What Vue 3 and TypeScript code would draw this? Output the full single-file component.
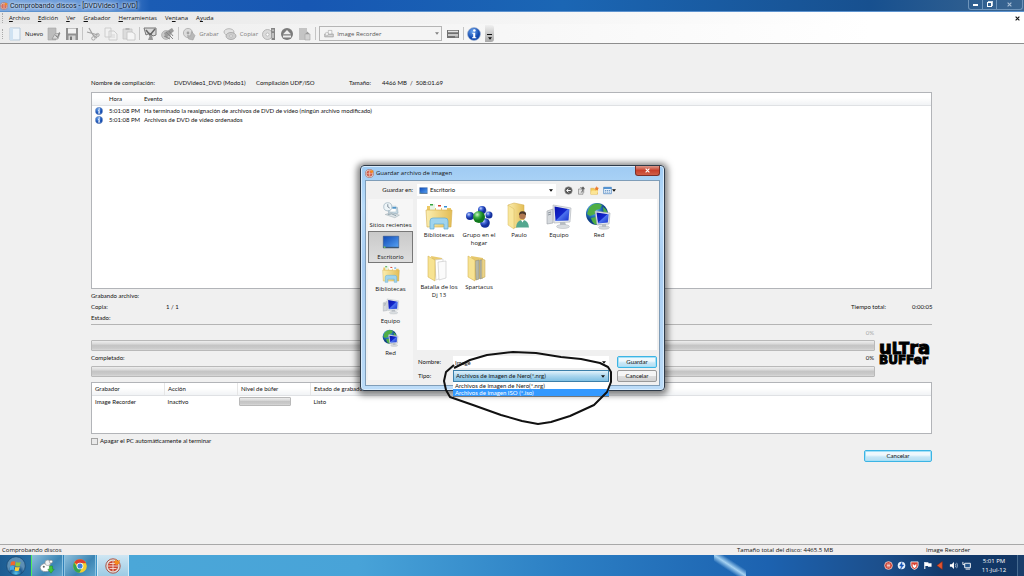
<script setup lang="ts">
import { ref } from 'vue'

interface Tool { id?: string; label?: string; sep?: boolean; name?: string }

const menus: [string, string, string][] = [
  ['', 'A', 'rchivo'],
  ['', 'E', 'dición'],
  ['', 'V', 'er'],
  ['', 'G', 'rabador'],
  ['', 'H', 'erramientas'],
  ['Ve', 'n', 'tana'],
  ['A', 'y', 'uda'],
]

const tools: Tool[] = [
  { id: 'new', label: 'Nuevo' },
  { id: 'open', name: 'Abrir' },
  { id: 'save', name: 'Guardar' },
  { sep: true },
  { id: 'cut', name: 'Cortar' },
  { id: 'copy', name: 'Copiar' },
  { id: 'paste', name: 'Pegar' },
  { sep: true },
  { id: 'check', name: 'Comprobar' },
  { id: 'erase', name: 'Borrar' },
  { sep: true },
  { id: 'burn', label: 'Grabar' },
  { id: 'discs', label: 'Copiar' },
  { id: 'discinfo', name: 'Información del disco' },
  { id: 'eject', name: 'Expulsar' },
  { id: 'label', name: 'Portada' },
  { sep: true },
]

const events = [
  { time: '5:01:08 PM', text: 'Ha terminado la reasignación de archivos de DVD de vídeo (ningún archivo modificado)' },
  { time: '5:01:08 PM', text: 'Archivos de DVD de vídeo ordenados' },
]

const places = [
  { id: 'recent', label: 'Sitios recientes' },
  { id: 'desktop', label: 'Escritorio' },
  { id: 'library', label: 'Bibliotecas' },
  { id: 'computer', label: 'Equipo' },
  { id: 'network', label: 'Red' },
]

const files = [
  { id: 'library', label: 'Bibliotecas' },
  { id: 'group', label: 'Grupo en el hogar' },
  { id: 'user', label: 'Paulo' },
  { id: 'computer', label: 'Equipo' },
  { id: 'network', label: 'Red' },
  { id: 'folder', label: 'Batalla de los Dj 13' },
  { id: 'folderfull', label: 'Spartacus' },
]

const types = ['Archivos de imagen de Nero(*.nrg)', 'Archivos de imagen ISO (*.iso)']
const tray = ['t-nero', 't-blue', 't-shield', 't-flag', 't-red', 't-sound', 't-net']

const place = ref('desktop')
const fileName = ref('Image')
const fileType = ref(types[0])
const hovered = ref(1)
const shutdown = ref(false)
</script>

<template>
  <div class="app">
    <svg class="defs" aria-hidden="true">
      <defs>
        <linearGradient id="gFolder" x1="0" x2="1"><stop offset="0" stop-color="#fbeeb0" /><stop offset="1" stop-color="#e3bd55" /></linearGradient>
        <linearGradient id="gScreen" x1="0" y1="0" x2="1" y2="1"><stop offset="0" stop-color="#0a12a8" /><stop offset=".5" stop-color="#1226cc" /><stop offset=".55" stop-color="#4c72ee" /><stop offset="1" stop-color="#1530cc" /></linearGradient>
        <linearGradient id="gDesk" x1="0" y1="0" x2="1" y2="1"><stop offset="0" stop-color="#0f49b5" /><stop offset="1" stop-color="#58a4f5" /></linearGradient>
        <radialGradient id="gGlobe" cx=".35" cy=".3"><stop offset="0" stop-color="#9fd8f5" /><stop offset=".6" stop-color="#2879c4" /><stop offset="1" stop-color="#0d3f86" /></radialGradient>
        <radialGradient id="gBlue" cx=".35" cy=".3"><stop offset="0" stop-color="#c9d8fc" /><stop offset=".5" stop-color="#3f64d6" /><stop offset="1" stop-color="#14309c" /></radialGradient>
        <radialGradient id="gGreen" cx=".35" cy=".3"><stop offset="0" stop-color="#cdf5c6" /><stop offset=".5" stop-color="#3fb047" /><stop offset="1" stop-color="#127a1e" /></radialGradient>
        <radialGradient id="gInfo" cx=".4" cy=".3"><stop offset="0" stop-color="#6fa8f0" /><stop offset="1" stop-color="#134bb0" /></radialGradient>
        <radialGradient id="gOrb" cx=".5" cy=".9"><stop offset="0" stop-color="#56c4ee" /><stop offset=".6" stop-color="#1c5a90" /><stop offset="1" stop-color="#5d8fb5" /></radialGradient>
      </defs>

      <symbol id="nero" viewBox="0 0 16 16"><circle cx="8" cy="8" r="7.2" fill="#e2dcd8" stroke="#a8564a" /><circle cx="8" cy="8" r="5.2" fill="#c8442f" /><path d="M3 8h10M8 3v10M4.5 5.500h7M4.500 10.500h7" stroke="#f6dcd4" stroke-width=".9" /><path d="M9 4.500l2-3.500 1 2 3-1-1 4-3 1z" fill="#f58a1c" /></symbol>
      <symbol id="info" viewBox="0 0 16 16"><circle cx="8" cy="8" r="7.4" fill="url(#gInfo)" stroke="#a9b7cc" stroke-width=".7" /><circle cx="8.4" cy="4" r="1.5" fill="#fff" /><path d="M6 6.6h3.4v5h1.2v1.2H5.8v-1.2h1.3V7.8H6z" fill="#fff" /></symbol>

      <symbol id="new" viewBox="0 0 14 14"><path d="M2 1h10v12H2z" fill="#eef5fb" stroke="#b6c9da" /><path d="M2 1h3v12H2z" fill="#cfe2f2" /></symbol>
      <symbol id="open" viewBox="0 0 14 14"><path d="M1 1h8v12H1z" fill="#bcbcbc" stroke="#a4a4a4" stroke-width=".6" /><path d="M5 12l3-5 5-1-2 6z" fill="#d8d8d8" stroke="#888" stroke-width=".6" /><path d="M8.500 8l2 2.500 2-5" fill="none" stroke="#777" /></symbol>
      <symbol id="save" viewBox="0 0 14 14"><path d="M1 1h12v12H1z" fill="#8f8f8f" /><path d="M3 1.5h8v5H3z" fill="#f1f1f1" /><path d="M3.5 8.5h7v4.5h-7z" fill="#d4d4d4" /><path d="M5 9.5h2V13H5z" fill="#777" /></symbol>
      <symbol id="cut" viewBox="0 0 14 14"><path d="M3 1l4 7M1 5l11 3M7 8l4 3" stroke="#a0a0a0" stroke-width="1.2" fill="none" /><circle cx="11.6" cy="8" r="1.6" fill="none" stroke="#a6a6a6" /><circle cx="7.4" cy="11.4" r="1.7" fill="none" stroke="#a6a6a6" /></symbol>
      <symbol id="copy" viewBox="0 0 14 14"><path d="M1 1h6v9H1zM5 4h5l3 3v6H5z" fill="#f1f1f1" stroke="#cacaca" stroke-width=".9" /><path d="M7 8h4M7 10h4" stroke="#d6d6d6" /></symbol>
      <symbol id="paste" viewBox="0 0 14 14"><path d="M1 2h9v10H1z" fill="#dcdcdc" stroke="#c4c4c4" stroke-width=".8" /><path d="M3.5 1h4v2h-4z" fill="#b4b4b4" /><path d="M5 5h5l3 2v6H5z" fill="#f5f5f5" stroke="#c2c2c2" stroke-width=".8" /></symbol>
      <symbol id="check" viewBox="0 0 14 14"><path d="M1 1h12v7l-3 1-3-3-4 2z" fill="#d9d9d9" stroke="#777" /><path d="M3 3l4 5 5-6" fill="none" stroke="#666" stroke-width="1.5" /><path d="M7 8l-2 5h5l-1-5z" fill="#969696" /></symbol>
      <symbol id="erase" viewBox="0 0 14 14"><circle cx="5" cy="8" r="4.4" fill="#c9c9c9" stroke="#a4a4a4" stroke-width=".7" /><path d="M3 6l8-5 2 3-8 7z" fill="#9b9b9b" /><path d="M5 5l7 7M8 4l4 5M3 9l6 3" stroke="#868686" /></symbol>
      <symbol id="burn" viewBox="0 0 14 14"><circle cx="6" cy="6" r="4.6" fill="#dcdcdc" stroke="#ababab" stroke-width=".8" /><circle cx="6" cy="6" r="1.4" fill="#a2a2a2" /><path d="M6.500 12l-1-3.500 3 .5 1-4.500 3.500 4-2 4.500z" fill="#b8b8b8" stroke="#949494" stroke-width=".5" /></symbol>
      <symbol id="discs" viewBox="0 0 14 14"><ellipse cx="6" cy="5" rx="5" ry="3.300" fill="#e2e2e2" stroke="#ababab" stroke-width=".8" /><ellipse cx="8" cy="9" rx="5" ry="3.500" fill="#cdcdcd" stroke="#a2a2a2" stroke-width=".8" /><ellipse cx="8" cy="9" rx="1.600" ry="1" fill="#f7f7f7" stroke="#888" stroke-width=".4" /></symbol>
      <symbol id="discinfo" viewBox="0 0 14 14"><circle cx="5.5" cy="7.500" r="5" fill="#dadada" stroke="#aaa" stroke-width=".8" /><circle cx="5.5" cy="7.500" r="1.500" fill="#fff" stroke="#999" stroke-width=".5" /><path d="M9 1h4v12H9.600z" fill="#848484" /><path d="M11 2.500v1.800M11 6v5" stroke="#f0f0f0" stroke-width="1.100" /></symbol>
      <symbol id="eject" viewBox="0 0 14 14"><circle cx="7" cy="7" r="6" fill="#7b7b7b" /><path d="M7 3l4 4.300H3zM3 8.600h8v1.800H3z" fill="#ededed" /></symbol>
      <symbol id="label" viewBox="0 0 14 14"><path d="M1 1h8v12H1z" fill="#c4c4c4" /><path d="M7 7h5v6H7z" fill="#d2d2d2" stroke="#a5a5a5" stroke-width=".6" /><path d="M9.500 4.500l2 2.500H7.500z" fill="#9a9a9a" /></symbol>
      <symbol id="printer" viewBox="0 0 14 14"><path d="M1 7h12v4H1z" fill="#d7d7d7" stroke="#888" stroke-width=".8" /><path d="M6 2h5v5H6z" fill="#f7f7f7" stroke="#999" stroke-width=".7" /><circle cx="4" cy="7" r="2.4" fill="#eee" stroke="#999" stroke-width=".6" /></symbol>
      <symbol id="drive" viewBox="0 0 14 14"><path d="M1 3h12v8H1z" fill="#707070" /><path d="M2 4.5h10M2 8h10" stroke="#e3e3e3" stroke-width="1.3" /><path d="M9 9.8h3" stroke="#bbb" /></symbol>

      <symbol id="library" viewBox="0 0 28 28"><path d="M2 4h7l1 2h16v19H2z" fill="#ecc965" /><path d="M5 2h5v6H5z" fill="#e9f5e7" /><path d="M5 2h3v1.5H5z" fill="#36a340" /><path d="M11 3h5v5h-5z" fill="#fff" /><path d="M13 3h3v1.5h-3z" fill="#d44030" /><path d="M17 4h5v5h-5z" fill="#fff" /><path d="M19 4h3v1.5h-3z" fill="#348fd5" /><path d="M1 8h26l-1 17H2z" fill="url(#gFolder)" stroke="#d4ad4c" stroke-width=".6" /><path d="M5 27v-8q0-3 3-3h12q3 0 3 3v8h-4v-5H9v5z" fill="#9fd4ee" stroke="#5fa9d2" stroke-width=".7" /></symbol>
      <symbol id="group" viewBox="0 0 28 28"><path d="M5 14l9 0 8-6M14 14l6 7" stroke="#c4cfdb" stroke-width="3" /><circle cx="17" cy="8" r="4" fill="url(#gBlue)" /><circle cx="24" cy="13" r="3.500" fill="url(#gBlue)" /><circle cx="5" cy="14" r="4" fill="url(#gBlue)" /><circle cx="20" cy="21" r="4.800" fill="url(#gBlue)" /><circle cx="14" cy="15" r="6" fill="url(#gGreen)" /></symbol>
      <symbol id="user" viewBox="0 0 28 28"><path d="M3 3l6-2 10 2v20L9 26z" fill="url(#gFolder)" stroke="#d0aa4a" stroke-width=".5" /><path d="M3 3l6 4v20l-6-4z" fill="#f8e69c" stroke="#d9b95c" stroke-width=".5" /><circle cx="17.500" cy="14" r="3.300" fill="#b07850" /><path d="M14 13.500q0-4.500 3.800-4.200 3.800 0 3.200 4.200-1.500-2-3.700-2-2.300 0-3.300 2z" fill="#4a382c" /><path d="M11 25.500q.5-7.500 6.500-7.500t6.500 7.500z" fill="#53a78f" /><path d="M16 18l1.500 2.500L19 18z" fill="#fff" /></symbol>
      <symbol id="computer" viewBox="0 0 28 28"><path d="M2 9l6-2v14l-6 1z" fill="#d5d9dd" stroke="#9aa0a6" stroke-width=".6" /><path d="M3 11l3-1M3 13l3-1" stroke="#7d8892" stroke-width=".8" /><path d="M8 3l18 3-1 14-16 1z" fill="#e7eaed" stroke="#a9afb6" stroke-width=".6" /><path d="M9.500 4.600l15 2.600-1 11.200-13 .6z" fill="url(#gScreen)" /><path d="M15 20l5 0 1 3h-6z" fill="#b7bdc3" /><ellipse cx="18" cy="24.500" rx="6.500" ry="2" fill="#dadee1" stroke="#b0b5ba" stroke-width=".5" /></symbol>
      <symbol id="network" viewBox="0 0 28 28"><circle cx="12" cy="12" r="11" fill="url(#gGlobe)" /><path d="M4 6q6-7 13-3l-2 4-4 1-1 4-5 2-3-2zM6 16l5-1 3 4-3 4q-4-2-5-7zM18 5q4 2 4.500 7l-4-2z" fill="#4fae45" /><path d="M10 9l15 2-1 11-12 1z" fill="#e7eaed" stroke="#9fa6ad" stroke-width=".6" /><path d="M11.500 10.400l12.200 1.800-.9 8.400-9.800.8z" fill="url(#gScreen)" /><ellipse cx="19" cy="25.500" rx="5.500" ry="1.800" fill="#d6dadd" stroke="#aaa" stroke-width=".4" /><path d="M17 22h4v3h-4z" fill="#b9bec3" /></symbol>
      <symbol id="folder" viewBox="0 0 28 28"><path d="M6 2l11 2v19l-6 2z" fill="#e9ca70" /><path d="M10 6l8-1v18l-7 3z" fill="#fff" stroke="#c9c9c9" stroke-width=".6" /><path d="M13 8l8-1v17l-7 2z" fill="#fbfbfb" stroke="#c4c4c4" stroke-width=".6" /><path d="M3 2l7 4v21l-7-4z" fill="#f7e392" stroke="#d6b658" stroke-width=".6" /></symbol>
      <symbol id="folderfull" viewBox="0 0 28 28"><path d="M6 2l12 2v20l-8 2z" fill="#e6c76b" /><path d="M10 7l4-1v19l-3 1zM15 6l3 0v18l-3 1z" fill="#b4b7a8" stroke="#8a8a7c" stroke-width=".5" /><path d="M17 5l3 1v17l-3 1z" fill="#ead38a" stroke="#c5a650" stroke-width=".5" /><path d="M3 2l7 4v21l-7-4z" fill="#f7e392" stroke="#d6b658" stroke-width=".6" /></symbol>
      <symbol id="recent" viewBox="0 0 28 28"><path d="M9 12l15-2 1 9-14 3z" fill="#c8dbe6" stroke="#7f99a8" stroke-width=".7" /><path d="M12 8h10v9H12z" fill="#fff" stroke="#9fb2be" stroke-width=".6" /><path d="M16 9h6v3h-6z" fill="#4f94c8" /><circle cx="9" cy="9" r="6.300" fill="#eef5f8" stroke="#90a7b5" /><path d="M9 5v4l3 2" stroke="#456" stroke-width="1" fill="none" /><path d="M5 21l9-3 13 4-7 4z" fill="#dfe5e8" stroke="#92a0a8" stroke-width=".7" /><path d="M9 21l6-1 7 3" stroke="#66808e" fill="none" /></symbol>
      <symbol id="desktop" viewBox="0 0 28 28"><path d="M2 5h24v18H2z" fill="url(#gDesk)" stroke="#294a7d" stroke-width=".8" /><path d="M2 21.500h24V23.500H2z" fill="#3a5572" /><circle cx="4" cy="22" r="1.500" fill="#6fc36b" /></symbol>

      <symbol id="back" viewBox="0 0 12 12"><circle cx="6" cy="6" r="5" fill="#555" stroke="#999" stroke-width=".8" /><path d="M9 6H4M6 3.500L3.500 6 6 8.500" stroke="#fff" stroke-width="1.300" fill="none" /></symbol>
      <symbol id="up" viewBox="0 0 12 12"><path d="M2 4h6v7H2zM4 2h5v7" fill="#e2e2e2" stroke="#777" stroke-width=".8" /><path d="M5 9q3-1 3-5M6 4l2-3 2 3z" fill="#666" stroke="#555" stroke-width=".6" /></symbol>
      <symbol id="newfolder" viewBox="0 0 12 12"><path d="M1 3h4l1 1h4v7H1z" fill="#f3c957" stroke="#d9a63b" stroke-width=".6" /><path d="M2 6h9l-2 5H1z" fill="#fce595" /><path d="M9 0l.8 2L12 2.500 10.500 4l.3 2L9 5 7.200 6l.3-2L6 2.500l2.200-.5z" fill="#ee7a2c" /></symbol>
      <symbol id="view" viewBox="0 0 14 12"><path d="M1 1h12v10H1z" fill="#e9f3fc" stroke="#3576b8" /><path d="M1 1h12v2.500H1z" fill="#3f86cc" /><path d="M3 6h2M6 6h2M9 6h2M3 8.500h2M6 8.500h2M9 8.500h2" stroke="#4a80b8" stroke-width="1.200" /></symbol>
      <symbol id="arrow" viewBox="0 0 6 4"><path d="M0 0h6L3 4z" fill="#111" /></symbol>
      <symbol id="close" viewBox="0 0 8 8"><path d="M1 1l6 6M7 1L1 7" stroke="currentColor" stroke-width="1.800" /></symbol>

      <symbol id="start" viewBox="0 0 20 20"><circle cx="10" cy="10" r="9.300" fill="url(#gOrb)" stroke="#15436d" stroke-width=".7" /><path d="M5 6q2-1.500 4.300-.4L8.700 9.500Q6.500 8.400 4.400 9.800z" fill="#f0672e" /><path d="M10 6q2.200 1.200 4.600 0l-.8 3.900q-2.200 1.200-4.400 0z" fill="#8bc63e" /><path d="M4.200 10.600q2.200-1.300 4.300-.3l-.7 3.800q-2-1-4.200.3z" fill="#45a9e8" /><path d="M9.300 10.700q2.200 1.200 4.400 0l-.8 3.800q-2.100 1.200-4.300 0z" fill="#fbd03b" /></symbol>
      <symbol id="disccopy" viewBox="0 0 20 20"><ellipse cx="8" cy="12" rx="6.500" ry="5" fill="#fff" stroke="#888" stroke-width=".8" /><circle cx="11" cy="6" r="3.500" fill="#f2f2f2" stroke="#999" stroke-width=".8" /><circle cx="15" cy="4.500" r="2" fill="#fff" stroke="#777" stroke-width=".7" /><circle cx="6" cy="11" r="1.300" fill="#666" /><path d="M13 10h4v4h2l-4 5-4-5h2z" fill="#42c43c" stroke="#1c8a25" stroke-width=".6" /></symbol>
      <symbol id="chrome" viewBox="0 0 20 20"><circle cx="10" cy="10" r="8.500" fill="#f5cf2e" /><path d="M10 10L2.640 5.750A8.500 8.500 0 0 1 17.800 6.600L10 6.200z" fill="#dd4030" /><path d="M2.640 5.750A8.500 8.500 0 0 0 9.200 18.500L13 12 10 10 6.500 11.500z" fill="#35a350" /><circle cx="10" cy="10" r="4.200" fill="#fff" /><circle cx="10" cy="10" r="3.200" fill="#3f80e0" /></symbol>

      <symbol id="t-nero" viewBox="0 0 10 10"><circle cx="5" cy="5" r="4.300" fill="#c9382b" stroke="#f0c9c2" /><path d="M3 3.500h4M3 5h4M3 6.500h4" stroke="#fff" stroke-width=".8" /></symbol>
      <symbol id="t-blue" viewBox="0 0 10 10"><circle cx="5" cy="5" r="4.200" fill="#e7f1fb" /><path d="M5.500 1.500L3 5.500h2L4 9l3.500-4.500h-2z" fill="#1656b8" stroke="#1656b8" stroke-width=".6" /></symbol>
      <symbol id="t-shield" viewBox="0 0 10 10"><path d="M1 1h8v4q0 3-4 4.500Q1 8 1 5z" fill="#d8402f" stroke="#f3f3f3" stroke-width=".9" /><path d="M3 3l2 2 2-2v3L5 8 3 6z" fill="#fff" /></symbol>
      <symbol id="t-flag" viewBox="0 0 10 10"><path d="M2 1v8" stroke="#fff" stroke-width="1.200" /><path d="M2 1.500h4v1h3.500v4H5.500v-1H2z" fill="#fff" /></symbol>
      <symbol id="t-red" viewBox="0 0 10 10"><path d="M1 5l6-4.500v9z" fill="#e2562f" stroke="#8a2413" stroke-width=".6" /></symbol>
      <symbol id="t-sound" viewBox="0 0 10 10"><path d="M1 3.500h2L5.500 1v8L3 6.500H1z" fill="#fff" /><path d="M7 3q1.200 2 0 4M8.500 2q2 3 0 6" fill="none" stroke="#dce8f5" stroke-width=".7" /></symbol>
      <symbol id="t-net" viewBox="0 0 10 10"><path d="M3 2.500h6.300v5H3z" fill="#23558c" stroke="#fff" /><path d="M1 1v3h2M4 9h5" stroke="#fff" fill="none" /></symbol>
    </svg>

    <header class="titlebar">
      <svg class="i8"><use href="#nero" /></svg>
      <h1>Comprobando discos - [DVDVideo1_DVD]</h1>
      <div class="winbtns">
        <button aria-label="Minimizar"><i class="min"></i></button>
        <button aria-label="Restaurar"><i class="max"></i></button>
        <button class="wide" aria-label="Cerrar"><svg class="i5"><use href="#close" /></svg></button>
      </div>
    </header>

    <nav class="menubar">
      <i class="grip"></i>
      <button v-for="m in menus" :key="m[2]">{{ m[0] }}<u>{{ m[1] }}</u>{{ m[2] }}</button>
      <button class="mdi" aria-label="Cerrar compilación"><svg class="i5"><use href="#close" /></svg></button>
    </nav>

    <div class="toolbar">
      <i class="grip"></i>
      <template v-for="(t, i) in tools" :key="i">
        <i v-if="t.sep" class="sep"></i>
        <button v-else :aria-label="t.label || t.name" :class="{ off: i > 0 }">
          <svg class="i14"><use :href="'#' + t.id" /></svg><span v-if="t.label">{{ t.label }}</span>
        </button>
      </template>
      <div class="recorder">
        <svg class="i10"><use href="#printer" /></svg>
        <select aria-label="Grabador" disabled><option>Image Recorder</option></select>
        <svg class="arr dim"><use href="#arrow" /></svg>
      </div>
      <button aria-label="Seleccionar grabador"><svg class="i14"><use href="#drive" /></svg></button>
      <i class="sep"></i>
      <button aria-label="Información"><svg class="i14"><use href="#info" /></svg></button>
      <button class="more" aria-label="Más botones"><i></i><svg class="arr"><use href="#arrow" /></svg></button>
    </div>

    <main class="body">
      <div class="summary">
        <span>Nombre de compilación:</span><span>DVDVideo1_DVD (Modo1)</span><span>Compilación UDF/ISO</span>
        <span>Tamaño:</span><span>4466 MB&nbsp; /&nbsp; 508:01.69</span>
      </div>

      <div class="panel log">
        <table>
          <thead><tr><th class="c0"></th><th class="c1">Hora</th><th>Evento</th></tr></thead>
          <tbody>
            <tr v-for="(e, i) in events" :key="i">
              <td><svg class="i8"><use href="#info" /></svg></td><td>{{ e.time }}</td><td>{{ e.text }}</td>
            </tr>
          </tbody>
        </table>
      </div>

      <div class="state">
        <div>Grabando archivo:</div>
        <div class="line"><span class="key">Copia:</span><span>1 / 1</span><span class="total">Tiempo total:</span><span class="clock">0:00:05</span></div>
        <div>Estado:</div>
      </div>

      <div class="progress">
        <div class="bars">
          <div class="cap end dimtext">0%</div>
          <div class="bar" role="progressbar" aria-label="Progreso" aria-valuenow="0"></div>
          <div class="cap"><span>Completado:</span><span>0%</span></div>
          <div class="bar" role="progressbar" aria-label="Completado" aria-valuenow="0"></div>
        </div>
        <div class="ultra">
          <div class="u1"><b>u</b>LT<b>ra</b></div>
          <div class="u2">BUFFer</div>
        </div>
      </div>

      <div class="panel recorders">
        <table>
          <thead><tr><th class="w">Grabador</th><th class="w">Acción</th><th class="w">Nivel de búfer</th><th>Estado de grabador</th></tr></thead>
          <tbody><tr><td>Image Recorder</td><td>Inactivo</td><td class="lvl"><div class="bar small"></div></td><td>Listo</td></tr></tbody>
        </table>
      </div>

      <label class="tick"><input v-model="shutdown" type="checkbox" />Apagar el PC automáticamente al terminar</label>
      <div class="actions"><button class="btn primary">Cancelar</button></div>
    </main>

    <footer class="status"><span class="s1">Comprobando discos</span><span class="s2">Tamaño total del disco: 4465.5 MB</span><span class="s3">Image Recorder</span></footer>

    <div class="taskbar">
      <button class="orb" aria-label="Inicio"><svg class="i20"><use href="#start" /></svg></button>
      <button class="task busy" aria-label="Copia de discos"><svg class="i16"><use href="#disccopy" /></svg></button>
      <button class="task" aria-label="Chrome"><svg class="i16"><use href="#chrome" /></svg></button>
      <button class="task on" aria-label="Nero"><svg class="i16"><use href="#nero" /></svg></button>
      <div class="tray"><svg v-for="t in tray" :key="t" class="i9"><use :href="'#' + t" /></svg></div>
      <div class="time"><div>5:01 PM</div><div>11-Jul-12</div></div>
      <button class="peek" aria-label="Mostrar escritorio"></button>
    </div>

    <section class="dialog" role="dialog" aria-labelledby="dlg">
      <div class="dhead">
        <svg class="i9"><use href="#nero" /></svg>
        <h2 id="dlg">Guardar archivo de imagen</h2>
        <button class="dclose" aria-label="Cerrar"><svg class="i5"><use href="#close" /></svg></button>
      </div>
      <div class="client">
        <div class="lookin">
          <label for="look">Guardar en:</label>
          <div class="combo">
            <svg class="i9"><use href="#desktop" /></svg>
            <select id="look"><option>Escritorio</option></select>
            <svg class="arr"><use href="#arrow" /></svg>
          </div>
          <button aria-label="Atrás"><svg class="i9"><use href="#back" /></svg></button>
          <button aria-label="Subir un nivel"><svg class="i9"><use href="#up" /></svg></button>
          <button aria-label="Crear carpeta"><svg class="i9"><use href="#newfolder" /></svg></button>
          <button class="views" aria-label="Vistas"><svg class="i9"><use href="#view" /></svg><svg class="arr"><use href="#arrow" /></svg></button>
        </div>
        <div class="split">
          <nav class="places">
            <button v-for="p in places" :key="p.id" :class="{ on: p.id === place }" @click="place = p.id">
              <svg class="i18"><use :href="'#' + p.id" /></svg><span>{{ p.label }}</span>
            </button>
          </nav>
          <div class="right">
            <div class="files">
              <button v-for="f in files" :key="f.label"><svg class="i28"><use :href="'#' + f.id" /></svg><span>{{ f.label }}</span></button>
            </div>
            <div class="form">
              <label for="fname">Nombre:</label>
              <div class="combo"><input id="fname" v-model="fileName" type="text" /><svg class="arr"><use href="#arrow" /></svg></div>
              <button class="btn primary">Guardar</button>
              <label for="ftype">Tipo:</label>
              <div class="combo opened">
                <select id="ftype" v-model="fileType"><option v-for="t in types" :key="t">{{ t }}</option></select>
                <svg class="arr"><use href="#arrow" /></svg>
                <ul class="drop">
                  <li v-for="(t, i) in types" :key="t" :class="{ hot: i === hovered }" @mouseenter="hovered = i">{{ t }}</li>
                </ul>
              </div>
              <button class="btn">Cancelar</button>
            </div>
          </div>
        </div>
      </div>
      <svg class="ink" viewBox="0 0 176 80" aria-hidden="true">
        <path d="M14 20L30 12 47 7 73 4 96 5 121 9 141 11 160 15 168 19 171 24 171 34 167 44 154 57 130 68 111 74 98 76 82 73 61 67 33 57 10 49 6 42 4 33 6 24 14 17" />
      </svg>
    </section>
  </div>
</template>

<style>
html, body { margin: 0; height: 100%; }
#app { height: 100%; }
</style>

<style scoped>
.app { position: relative; display: flex; flex-direction: column; min-height: 100vh; background: #f0f0f0; color: #111; font: 6px/8px "Open Sans", "Noto Sans", sans-serif; overflow: hidden; }
.defs { position: absolute; width: 0; height: 0; }
svg { display: block; flex: none; }
button, input, select { margin: 0; padding: 0; border: 0; background: none; font: inherit; color: inherit; border-radius: 0; appearance: none; outline: none; }
h1, h2 { margin: 0; font-size: 6px; font-weight: 400; }
.i5 { width: 5px; height: 5px; }
.i8 { width: 8px; height: 8px; }
.i9 { width: 9px; height: 9px; }
.i10 { width: 10px; height: 10px; }
.i14 { width: 14px; height: 14px; }
.i16 { width: 16px; height: 16px; }
.i18 { width: 18px; height: 18px; }
.i20 { width: 20px; height: 20px; }
.i28 { width: 28px; height: 28px; }
.arr { width: 4px; height: 3px; }
.dim { opacity: .5; }

.titlebar { display: flex; align-items: center; height: 12px; box-sizing: border-box; border-bottom: 1px solid #5d93cf; background: linear-gradient(90deg, #7fa9dd 0, #5f92d6 110px, #1b5cb4 150px, #1757b3 30%, #1b66b4 55%, #17508f 85%, #3a6590 100%); gap: 2px; }
.titlebar h1 { font: 7px/10px Roboto, sans-serif; text-shadow: 0 0 3px #fff, 0 0 4px #fff; color: #0c1a30; }
.winbtns { display: flex; margin-left: auto; align-self: flex-start; border: 1px solid #6f95bb; border-top: 0; border-radius: 0 0 3px 3px; margin-right: 1px; }
.winbtns button { width: 14px; height: 9px; display: grid; place-items: center; border-right: 1px solid #6f95bb; }
.winbtns .wide { width: 25px; border-right: 0; color: #a9bfd6; }
.min { width: 5px; height: 2px; background: #fff; }
.max { width: 3px; height: 3px; border: 1px solid #fff; box-shadow: 1px -1px 0 #ccd9e6; }

.menubar { display: flex; align-items: center; height: 12px; padding-left: 2px; gap: 8px; background: linear-gradient(90deg, #e6e6e6, #fff 85%); }
.menubar .grip { margin-right: -3px; }
.menubar .mdi { margin-left: auto; margin-right: 4px; }
.grip { width: 1px; height: 10px; border-left: 1px dotted #aaa; }
.toolbar { display: flex; align-items: center; height: 19px; padding-left: 2px; gap: 4px; border-bottom: 1px solid #8e8e8e; background: linear-gradient(90deg, #ececec, #fff 85%); }
.toolbar button { display: flex; align-items: center; gap: 3px; }
.toolbar .off { color: #808080; }
.sep { width: 1px; height: 13px; margin: 0 -1px; background: #c5c5c5; }
.recorder { display: flex; align-items: center; box-sizing: border-box; width: 123px; height: 15px; padding: 0 2px 0 4px; gap: 3px; border: 1px solid #b5b5b5; background: #f4f4f4; color: #555; }
.recorder select { flex: 1; opacity: 1; }
.toolbar .more { flex-direction: column; justify-content: flex-end; gap: 2px; width: 9px; height: 17px; padding-bottom: 2px; box-sizing: border-box; background: linear-gradient(#f0f0f0, #a8a8a8); border-radius: 0 3px 3px 0; }
.more i { width: 5px; height: 1px; background: #111; }

.body { flex: 1; padding: 35px 92px 0 91px; font-family: Lato, "Liberation Sans", sans-serif; }
.summary { display: grid; grid-template-columns: 83px 82px 93px 33px 1fr; margin-bottom: 5px; }
.panel { box-sizing: border-box; border: 1px solid #b2b4b8; background: #fff; }
table { width: 100%; border-collapse: collapse; table-layout: fixed; }
th, td { padding: 0 0 0 3px; text-align: left; font-weight: 400; white-space: nowrap; }
th { height: 12px; background: linear-gradient(#fff 40%, #f1f3f5); border-bottom: 1px solid #dfe1e4; }
.log { height: 197px; }
.log .c0 { width: 11px; }
.log .c1 { width: 32px; }
.log td { height: 9px; }
.state { padding: 1px 0; line-height: 11px; border-bottom: 1px solid #b4b4b4; }
.line { display: flex; }
.key { width: 75px; }
.total { margin-left: auto; width: 61px; }
.clock { width: 20px; text-align: right; }
.progress { display: flex; align-items: center; gap: 4px; padding-top: 4px; }
.bars { flex: 1; }
.cap { display: flex; justify-content: space-between; line-height: 8px; padding: 0 1px 3px 0; }
.bar + .cap { padding: 3px 1px 4px 0; }
.cap.end { justify-content: flex-end; }
.dimtext { color: #a8a8a8; }
.bar { box-sizing: border-box; height: 11px; border: 1px solid #b9b9b9; border-radius: 1px; background: linear-gradient(#ededed, #d8d8d8 35%, #c4c4c4 45%, #cacaca 80%, #d9d9d9); }
.ultra { width: 53px; font-family: "DejaVu Sans", sans-serif; font-weight: 700; color: #000; white-space: nowrap; -webkit-text-stroke: 1px #000; }
.u1 { font-size: 15px; line-height: 12px; }
.u1 b { font-size: 18px; }
.u2 { font-size: 12px; line-height: 10px; }
.recorders { height: 52px; margin-top: 5px; }
.recorders .w { width: 69px; border-right: 1px solid #e6e6e6; }
.recorders td { height: 11px; }
.recorders .lvl { padding-left: 1px; }
.small { width: 52px; height: 9px; }
.tick { display: flex; align-items: center; width: max-content; gap: 2px; margin-top: 3px; }
.tick input { width: 7px; height: 7px; box-sizing: border-box; border: 1px solid #a3a3a3; background: #e9e9e9; }
.actions { display: flex; justify-content: flex-end; margin-top: 5px; }
.btn { box-sizing: border-box; height: 12px; border: 1px solid #9a9a9a; border-radius: 2px; background: linear-gradient(#f5f5f5 45%, #dcdcdc 55%, #d2d2d2); text-align: center; line-height: 8px; }
.primary { border-color: #3cb4e4; background: linear-gradient(#eef8fd 40%, #c6e6f6 60%, #b4def3); box-shadow: inset 0 0 0 1px #a4e0f7; }
.actions .btn { width: 68px; }

.status { display: flex; align-items: center; height: 10px; border-top: 1px solid #a8a8a8; background: #f0eeee; padding-left: 2px; }
.s2 { margin-left: auto; width: 189px; }
.s3 { width: 98px; }
.taskbar { display: flex; align-items: center; height: 21px; background: linear-gradient(to top right, transparent 35%, #a5d2f2 50%, transparent 65%) 72% 0 / 32px 21px no-repeat, linear-gradient(90deg, #1d5c92 0, #2f80b8 60px, #4ba7d8 130px, #48a3d8 35%, #2c7fc4 55%, #1c62b0 75%, #1c4f8c 86%, #123a6c 92%, #123562); }
.orb { width: 31px; display: grid; place-items: center; }
.task { width: 32px; height: 21px; box-sizing: border-box; margin-right: 1px; display: grid; place-items: center; border: 1px solid #8fc4e2; border-top: 0; border-bottom: 0; background: linear-gradient(135deg, #8fc0dc, #3c85b4 60%, #5ea4cc); }
.task.busy { border-left: 1px solid #50ec58; }
.task.on { background: linear-gradient(#cfe6f3, #9ccbe4); border-color: #d5ebf7; }
.tray { margin-left: auto; display: flex; gap: 4px; }
.time { width: 46px; text-align: center; color: #fff; line-height: 9px; }
.peek { width: 7px; height: 21px; border-left: 1px solid #45698f; background: #1a3e6b; }

.dialog { position: absolute; left: 50%; top: 165px; width: 305px; margin-left: -152px; box-sizing: border-box; padding: 0 4px 4px; border: 1px solid #2f3b49; border-radius: 4px; background: linear-gradient(#9fcbf3, #b9dcfa 40px, #a9cdf2 100px, #bcdcf8); box-shadow: inset 0 0 0 1px #d9ecfc, 0 1px 6px 3px rgba(0, 0, 0, .5); }
.dhead { display: flex; align-items: center; height: 14px; gap: 2px; }
.dclose { align-self: flex-start; margin-left: auto; width: 25px; height: 10px; display: grid; place-items: center; color: #fff; border: 1px solid #7c2f28; border-top: 0; border-radius: 0 0 3px 3px; background: linear-gradient(#dd9a8c, #c8402c 50%, #cf5f48); box-sizing: border-box; }
.client { background: #f0f0f0; border: 1px solid #7f9db8; padding: 3px 2px; }
.lookin { display: flex; align-items: center; gap: 4px; height: 12px; margin-bottom: 3px; }
.lookin label { width: 45px; text-align: right; font-family: Lato, sans-serif; }
.combo { display: flex; align-items: center; gap: 2px; height: 12px; padding: 0 3px 0 2px; background: #fff; box-sizing: border-box; font-family: Lato, sans-serif; }
.combo select, .combo input { flex: 1; min-width: 0; height: 10px; }
.lookin .combo { width: 139px; margin-right: 4px; }
.views { display: flex; align-items: center; }
.split { display: flex; gap: 4px; }
.places { width: 45px; height: 181px; background: #f6f6f6; }
.places button { display: flex; flex-direction: column; align-items: center; justify-content: center; box-sizing: border-box; width: 100%; height: 32px; gap: 2px; white-space: nowrap; }
.places .on { border: 1px solid #777; background: linear-gradient(#c9c9c9, #dedede); }
.right { flex: 1; min-width: 0; }
.files { display: grid; grid-template-columns: repeat(auto-fill, 40px); grid-auto-rows: 52px; height: 151px; padding: 3px 2px; box-sizing: border-box; background: #fff; }
.files button { display: flex; flex-direction: column; align-items: center; gap: 1px; }
.form { display: grid; grid-template-columns: 36px 1fr 40px; column-gap: 0; row-gap: 2px; padding-top: 6px; align-items: center; }
.form label { font-family: Lato, sans-serif; padding-left: 1px; }
.form .combo { margin-right: 8px; }
.form .btn { font-family: Lato, sans-serif; }
.opened { position: relative; border: 1px solid #3c7fa9; background: linear-gradient(#e1f2fb, #a9d5ee 50%, #7fbfe2); }
.drop { position: absolute; z-index: 1; left: -1px; right: -1px; top: 11px; margin: 0; padding: 0; list-style: none; background: #fff; border-bottom: 1px solid #777; }
.drop li { padding-left: 2px; line-height: 7px; }
.drop .hot { background: #3399ff; color: #fff; }
.ink { position: absolute; left: 79px; top: 182px; width: 176px; height: 80px; z-index: 2; pointer-events: none; }
.ink path { fill: none; stroke: #111; stroke-width: 2; stroke-linejoin: round; }
</style>
